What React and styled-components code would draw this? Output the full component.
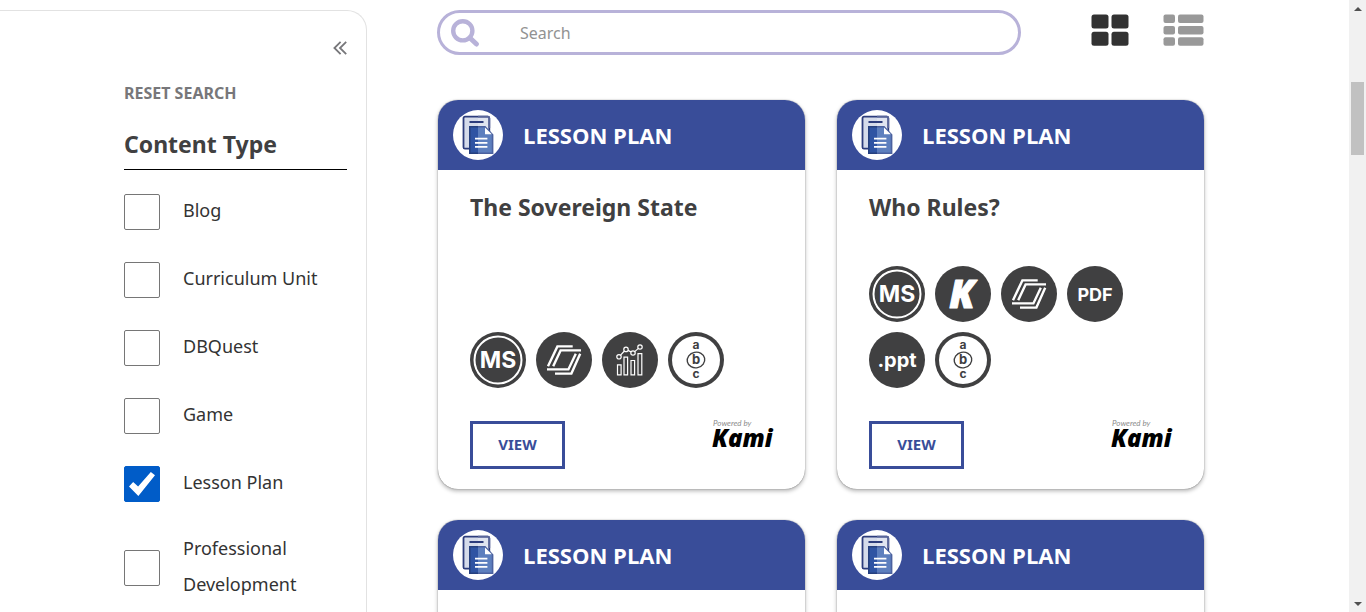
import React, { useState } from "react";
import styled, { createGlobalStyle } from "styled-components";

const blue = "#394d99";
const ink = "#404041";
const headingFont = '"Noto Sans", "Open Sans", sans-serif';

const GlobalStyle = createGlobalStyle`
  *, *::before, *::after { box-sizing: border-box; }
  body {
    margin: 0;
    background: #fff;
    color: #333;
    font-family: "Noto Sans", "Open Sans", sans-serif;
    font-size: 18px;
  }
`;

const Shell = styled.div`
  display: flex;
  height: 100vh;
  overflow: hidden;
`;

const Sidebar = styled.aside`
  flex: 0 0 367px;
  margin-top: 10px;
  padding: 30px 19px 0 124px;
  border: 1px solid #e2e2e2;
  border-width: 1px 1px 0 0;
  border-top-right-radius: 20px;
`;

const CollapseButton = styled.button`
  display: block;
  margin-left: auto;
  padding: 0;
  border: 0;
  background: none;
  color: #77777a;
  svg { display: block; }
`;

const ResetLink = styled.a`
  display: block;
  margin-top: 26px;
  color: #77777a;
  font: 700 16px/24px ${headingFont};
  text-decoration: none;
`;

const FilterTitle = styled.h2`
  margin: 21px 0 20px;
  padding-bottom: 7px;
  border-bottom: 1px solid #000;
  color: ${ink};
  font: 700 23px/36px ${headingFont};
`;

const FilterList = styled.div`
  display: flex;
  flex-direction: column;
  gap: 28px;
`;

const FilterRow = styled.label`
  display: flex;
  align-items: center;
  gap: 23px;
  min-height: 40px;
  line-height: 36px;
`;

const Tick = styled.input`
  appearance: none;
  flex: none;
  width: 36px;
  height: 36px;
  margin: 4px 0 0;
  border: 1px solid #767676;
  border-radius: 2px;
  background: #fff;
  &:checked {
    border-color: #005cc8;
    background: #005cc8;
  }
  &:checked::before {
    content: "";
    display: block;
    width: 26px;
    height: 24px;
    margin: 5px 4px;
    background: #fff;
    clip-path: polygon(0 60%, 16% 42%, 35% 60%, 84% 0, 100% 14%, 36% 100%);
  }
`;

const Main = styled.main`
  flex: 1;
  min-width: 0;
  padding: 10px 144px 0 70px;
`;

const TopBar = styled.div`
  display: flex;
  align-items: flex-start;
  gap: 34px;
  margin-bottom: 45px;
`;

const SearchBox = styled.div`
  flex: 1;
  display: flex;
  align-items: center;
  height: 45px;
  margin-right: 36px;
  padding: 0 20px 0 11px;
  border: 3px solid #b8b2d9;
  border-radius: 23px;
  svg { flex: none; }
`;

const SearchInput = styled.input`
  flex: 1;
  min-width: 0;
  padding: 0 0 0 40px;
  border: 0;
  outline: 0;
  background: none;
  color: #333;
  font: 16px/24px "Noto Sans", sans-serif;
  &::placeholder { color: #929292; opacity: 1; }
`;

const ViewButton = styled.button`
  padding: 4px 0 0;
  border: 0;
  background: none;
  color: ${(p) => (p.$active ? "#323232" : "#999")};
  svg { display: block; }
`;

const CardGrid = styled.div`
  display: grid;
  grid-template-columns: 1fr 1fr;
  gap: 31px 32px;
  padding: 0 1px;
`;

const Card = styled.article`
  display: flex;
  flex-direction: column;
  min-height: 389px;
  overflow: hidden;
  border-radius: 20px;
  background: #fff;
  box-shadow: 0 0 1px rgba(0, 0, 0, 0.6), 0 2px 4px rgba(0, 0, 0, 0.3);
`;

const CardHeader = styled.header`
  display: flex;
  align-items: center;
  gap: 20px;
  height: 70px;
  padding: 0 15px;
  background: ${blue};
  color: #fff;
  font: 700 22px/30px "Open Sans", sans-serif;
`;

const CardBody = styled.div`
  flex: 1;
  display: flex;
  flex-direction: column;
  padding: 19px 32px 20px;
`;

const CardTitle = styled.h3`
  margin: 0 0 auto;
  color: ${ink};
  font: 700 23px/36px ${headingFont};
`;

const Badges = styled.div`
  display: flex;
  flex-wrap: wrap;
  gap: 10px;
  margin-bottom: 33px;
  svg { display: block; }
`;

const CardFooter = styled.footer`
  display: flex;
  align-items: flex-start;
  justify-content: space-between;
`;

const OpenButton = styled.button`
  width: 95px;
  height: 48px;
  padding: 0 0 2px;
  border: 3px solid ${blue};
  background: #fff;
  color: ${blue};
  font: 700 15px/20px ${headingFont};
`;

const Mark = styled.svg`
  display: block;
  margin: -4px -2px 0 0;
`;

const ScrollTrack = styled.div`
  flex: 0 0 17px;
  display: flex;
  flex-direction: column;
  justify-content: space-between;
  align-items: center;
  padding: 7px 0 6px;
  background: #f1f1f1;
  svg { display: block; }
`;

const ScrollThumb = styled.div`
  width: 13px;
  height: 73px;
  margin: 71px 0 auto;
  background: #c1c1c1;
`;

const badgeFont = 'Inter, "Open Sans", sans-serif';
const logoFont = '"Open Sans", Lato, sans-serif';

const BadgeText = ({ y = 28, size, weight = 700, fill = "#fff", children }) => (
  <text x="28" y={y} fill={fill} textAnchor="middle" fontFamily={badgeFont} fontSize={size} fontWeight={weight}>
    {children}
  </text>
);

const badgeArt = {
  ms: (
    <>
      <circle cx="28" cy="28" r="23.5" fill="none" stroke="#fff" strokeWidth="2" />
      <BadgeText y={36} size={23}>MS</BadgeText>
    </>
  ),
  kami: (
    <text x="27" y="42" fill="#fff" textAnchor="middle" fontFamily={logoFont} fontSize="38" fontWeight="800" fontStyle="italic" stroke="#fff" strokeWidth="1" strokeLinejoin="round">K</text>
  ),
  slides: (
    <g fill="none" stroke="#fff" strokeWidth="2.4">
      <path d="M36.7 14.4H21.4L12 34.2" />
      <path d="M45 18.4H24.6L17.2 34.2" />
      <path d="M19 41.6H35.4L44.2 21.8" />
      <path d="M11 37.4H32.4L39.8 21.8" />
    </g>
  ),
  data: (
    <g fill="none" stroke="#fff" strokeWidth="1.2">
      <path d="M15.5 32.8h3.6v10h-3.6zM22 25.2h3.6v17.6H22zM29 28.5h3.6v14.3H29zM36 21.6h3.8v21.2H36z" />
      <circle cx="17" cy="24.8" r="2.2" />
      <circle cx="24" cy="17.4" r="2.2" />
      <circle cx="31" cy="21" r="2.2" />
      <circle cx="38" cy="15" r="2.2" />
      <path d="M18.6 23.1l3.8-4.1M26 18.4l3 1.5M32.7 19.6l3.7-3.2" />
    </g>
  ),
  pdf: <BadgeText y={35} size={18} weight={700}>PDF</BadgeText>,
  ppt: <BadgeText y={35} size={20}>.ppt</BadgeText>,
  abc: (
    <>
      <circle cx="28" cy="28" r="24" fill="#fff" />
      <BadgeText y={17} size={12} fill={ink}>a</BadgeText>
      <BadgeText y={32} size={13} fill={ink}>b</BadgeText>
      <BadgeText y={46} size={12} fill={ink}>c</BadgeText>
      <ellipse cx="28" cy="28" rx="8.8" ry="7.8" fill="none" stroke={ink} strokeWidth="1.4" transform="rotate(-12 28 28)" />
    </>
  ),
};

const Badge = ({ kind }) => (
  <svg width="56" height="56" viewBox="0 0 56 56">
    <circle cx="28" cy="28" r="28" fill={ink} />
    {badgeArt[kind]}
  </svg>
);

const LessonIcon = () => (
  <svg width="50" height="50" viewBox="0 0 50 50" aria-hidden="true">
    <circle cx="25" cy="25" r="25" fill="#fff" />
    <rect x="10.5" y="6.7" width="25.8" height="32" rx="1.5" fill="#d5dbea" />
    <path d="M25 6.7h9.8a1.5 1.5 0 0 1 1.5 1.5V20H25z" fill="#dfe4f0" />
    <rect x="10.5" y="6.7" width="25.8" height="32" rx="1.5" fill="none" stroke="#2c3c7c" strokeWidth="1.8" />
    <path d="M25 6.7h9.8a1.5 1.5 0 0 1 1.5 1.5V18" fill="none" stroke="#5a679b" strokeWidth="1.8" />
    <path d="M16.5 12H30.5" stroke="#2c3c7c" strokeWidth="2" />
    <path d="M16.8 16.7H32l7.6 8v18.6H16.8z" fill="#2f54a3" />
    <path d="M25 16.7h7l7.6 8v18.6H25z" fill="#5d7fbe" />
    <path d="M25 16.7h-8.2v26.6H25" fill="none" stroke="#26407f" strokeWidth="1.6" />
    <path d="M25 16.7h7l7.6 8v18.6H25" fill="none" stroke="#4b619f" strokeWidth="1.6" />
    <path d="M32 17.4v6.8h6.8z" fill="#fff" />
    <path d="M22 28.7h12.4M22 32.8h12.4M22 36.9h12.4" stroke="#fff" strokeWidth="1.7" />
  </svg>
);

const KamiMark = () => (
  <Mark width="66" height="38" viewBox="0 0 66 38" role="img" aria-label="Powered by Kami">
    <text x="4" y="9" fill="#8c8c8c" fontFamily="Lato, sans-serif" fontSize="8" fontStyle="italic">Powered by</text>
    <text x="3" y="30" fill="#000" fontFamily={logoFont} fontSize="24" fontWeight="800" fontStyle="italic">Kami</text>
  </Mark>
);

const filters = ["Blog", "Curriculum Unit", "DBQuest", "Game", "Lesson Plan", "Professional Development"];

const lessons = [
  { title: "The Sovereign State", badges: ["ms", "slides", "data", "abc"] },
  { title: "Who Rules?", badges: ["ms", "kami", "slides", "pdf", "ppt", "abc"] },
  { badges: [] },
  { badges: [] },
];

const LessonCard = ({ title, badges }) => (
  <Card>
    <CardHeader>
      <LessonIcon />
      LESSON PLAN
    </CardHeader>
    {title && (
      <CardBody>
        <CardTitle>{title}</CardTitle>
        <Badges>{badges.map((b) => <Badge key={b} kind={b} />)}</Badges>
        <CardFooter>
          <OpenButton type="button">VIEW</OpenButton>
          <KamiMark />
        </CardFooter>
      </CardBody>
    )}
  </Card>
);

export default function App() {
  const [selected, setSelected] = useState(["Lesson Plan"]);
  const toggle = (name) =>
    setSelected((s) => (s.includes(name) ? s.filter((n) => n !== name) : [...s, name]));

  return (
    <>
      <GlobalStyle />
      <Shell>
        <Sidebar>
          <CollapseButton type="button" aria-label="Collapse filters">
            <svg width="14" height="14" viewBox="0 0 14 14" fill="none" stroke="currentColor" strokeWidth="1.8">
              <path d="M7.6.8 1.4 7l6.2 6.2M13.2.8 7 7l6.2 6.2" />
            </svg>
          </CollapseButton>
          <ResetLink href="#reset">RESET SEARCH</ResetLink>
          <FilterTitle>Content Type</FilterTitle>
          <FilterList>
            {filters.map((name) => (
              <FilterRow key={name}>
                <Tick type="checkbox" checked={selected.includes(name)} onChange={() => toggle(name)} />
                <span>{name}</span>
              </FilterRow>
            ))}
          </FilterList>
        </Sidebar>
        <Main>
          <TopBar>
            <SearchBox>
              <svg width="29" height="29" viewBox="0 0 29 29" fill="none" stroke="#b8b2d9" aria-hidden="true">
                <circle cx="11.8" cy="12.8" r="9.6" strokeWidth="4.4" />
                <path d="M19 20l6.4 6" strokeWidth="5" strokeLinecap="round" />
              </svg>
              <SearchInput type="text" placeholder="Search" aria-label="Search" />
            </SearchBox>
            <ViewButton type="button" $active aria-label="Grid view">
              <svg width="38" height="32" viewBox="0 0 38 32" fill="currentColor">
                <rect x="0.5" y="0.5" width="17" height="14" rx="2.5" />
                <rect x="20.5" y="0.5" width="17" height="14" rx="2.5" />
                <rect x="0.5" y="17.8" width="17" height="14" rx="2.5" />
                <rect x="20.5" y="17.8" width="17" height="14" rx="2.5" />
              </svg>
            </ViewButton>
            <ViewButton type="button" aria-label="List view">
              <svg width="42" height="32" viewBox="0 0 42 32" fill="currentColor">
                <rect x="0.5" y="0.5" width="11.5" height="8.5" rx="2" />
                <rect x="15" y="0.5" width="25.5" height="8.5" rx="2" />
                <rect x="0.5" y="12" width="11.5" height="8.5" rx="2" />
                <rect x="15" y="12" width="25.5" height="8.5" rx="2" />
                <rect x="0.5" y="23.3" width="11.5" height="8.5" rx="2" />
                <rect x="15" y="23.3" width="25.5" height="8.5" rx="2" />
              </svg>
            </ViewButton>
          </TopBar>
          <CardGrid>
            {lessons.map((lesson, i) => <LessonCard key={i} {...lesson} />)}
          </CardGrid>
        </Main>
        <ScrollTrack aria-hidden="true">
          <svg width="8" height="4" viewBox="0 0 8 4"><path d="M0 4 4 0l4 4z" fill="#505050" /></svg>
          <ScrollThumb />
          <svg width="8" height="4" viewBox="0 0 8 4"><path d="M0 0h8L4 4z" fill="#505050" /></svg>
        </ScrollTrack>
      </Shell>
    </>
  );
}
